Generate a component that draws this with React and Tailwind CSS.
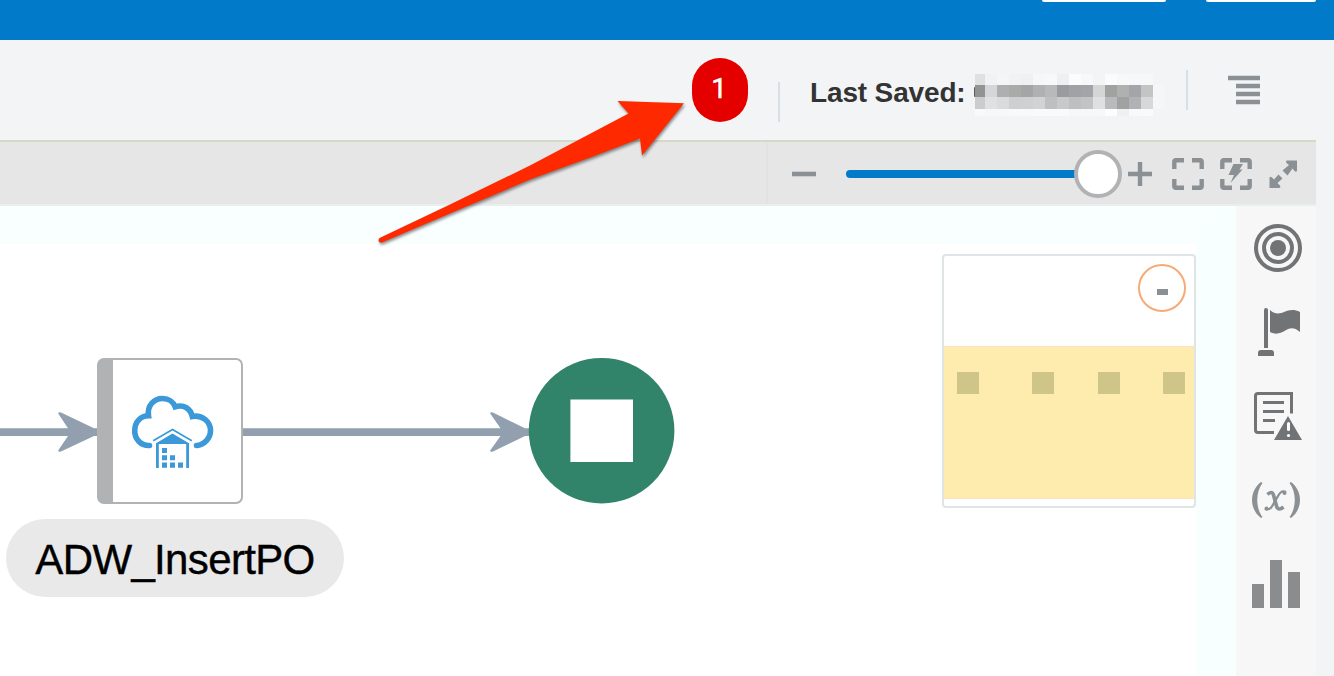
const MASK = [
  ['#dfe1e0', '#f1f2f3', '#f4f5f6', '#f0f2f3', '#eef0f2', '#f5f7f8', '#f6f8f9', '#edeff1', '#fafcfd', '#f6f8f9', '#f2f4f5', '#f9fbfc', '#f7f8fa', '#f6f7f9', '#f6f7f9', '#f3f4f6'],
  ['#929493', '#d4d6d8', '#aeb0af', '#a9abaa', '#a4a6a5', '#b0b1b3', '#b8b9bb', '#9a9b9e', '#a1a2a5', '#a3a4a7', '#d4d6d6', '#a0a2a1', '#afb1b0', '#a4a5a8', '#c3c5c4', '#f5f6f8'],
  ['#cbccce', '#e0e1e3', '#dadbdd', '#cecfd1', '#cfd0d2', '#d2d3d5', '#bebfc1', '#c8c9cb', '#bebfc1', '#c2c3c5', '#dfe1e0', '#b9babc', '#a0a2a1', '#b1b2b4', '#d7d8da', '#f5f6f8'],
  ['#f8faf9', '#f6f7f9', '#f7f8fa', '#f8f9fb', '#f8f9fb', '#f9fafb', '#f9fafc', '#f9fafc', '#f6f7f9', '#f6f7f9', '#f7f8fa', '#fcfdfd', '#eef0f2', '#f8f9fb', '#f9fafb', '#f3f4f6'],
];

function MaskedTimestamp() {
  return (
    <div className="grid h-[42px] w-[190.33px] grid-cols-[10.33px_repeat(15,12px)] grid-rows-[10.67px_12px_12px_7.33px]">
      {MASK.flat().map((c, i) => (
        <span key={i} style={{ backgroundColor: c }} />
      ))}
    </div>
  );
}

function TopBar() {
  return (
    <div className="flex h-10 shrink-0 justify-end gap-10 bg-[#007ac9] pr-[18px]">
      <div className="h-[2px] w-[124px] rounded-b-[2px] bg-white" />
      <div className="h-[2px] w-[110px] rounded-b-[2px] bg-white" />
    </div>
  );
}

function Header() {
  return (
    <header className="flex h-[100px] shrink-0 items-start pl-[692px]">
      <div className="mt-[18px] flex h-16 w-14 justify-center rounded-[28px] bg-[#e50000] pr-[2px] pt-[15px] font-['Roboto',sans-serif] text-[28px] leading-8 text-white [-webkit-text-stroke:0.5px_#fff]">
        1
      </div>
      <div className="ml-[30px] mt-[42px] h-10 w-[2px] bg-[#d6dfe6]" />
      <div className="ml-[30px] mt-[37px] w-[155px] whitespace-nowrap text-[28px] font-bold leading-8 tracking-[-0.15px] text-[#333]">
        Last Saved:
      </div>
      <div className="ml-[9px] mt-[47px] h-[10px] w-px rounded-l-full bg-[#5a5b5c]" />
      <div className="mt-[34px] flex">
        <MaskedTimestamp />
      </div>
      <div className="ml-[20.67px] mt-[30px] h-10 w-[2px] bg-[#d6dfe6]" />
      <svg className="ml-[40px] mt-[34px]" width="32" height="32" stroke="#8b9094" strokeWidth="4.600">
        <path d="M0 4H32M8 12H32M8 20H32M8 28H32" />
      </svg>
    </header>
  );
}

function ZoomSlider() {
  return (
    <div className="ml-[30px] flex h-12 w-[276px] items-center">
      <div className="h-2 w-[230px] rounded-l-full bg-[#007ac9]" />
      <div className="-ml-[2px] size-12 shrink-0 rounded-full border-4 border-[#b1b2b4] bg-white" />
    </div>
  );
}

const CORNERS = 'M2.300 11V4Q2.300 2.300 4 2.300H12M20 2.300H28Q29.700 2.300 29.700 4V11M29.700 21V28Q29.700 29.700 28 29.700H20M12 29.700H4Q2.300 29.700 2.300 28V21';

function Toolbar() {
  return (
    <div className="mr-[18px] flex h-[66px] shrink-0 items-center border-b-2 border-t-2 border-b-[#e9eeee] border-t-[#d5d9c5] bg-[#e6e6e6]">
      <div className="ml-[766px] h-full w-[2px] bg-[#e0e3e3]" />
      <div className="flex h-full items-center pt-[2px]">
        <svg className="ml-6" width="24" height="8" stroke="#8b9094" strokeWidth="4.600">
          <path d="M0 4H24" />
        </svg>
        <ZoomSlider />
        <svg className="ml-[6px]" width="24" height="24" stroke="#8b9094" strokeWidth="4.400">
          <path d="M0 12H24M12 0V24" />
        </svg>
        <svg className="ml-5" width="32" height="32" fill="none" stroke="#8b9094" strokeWidth="4.400">
          <path d={CORNERS} />
        </svg>
        <svg className="ml-4" width="32" height="32" fill="none" stroke="#8b9094" strokeWidth="4.400">
          <path d={CORNERS} />
          <path d="M13.500 6H23L19.500 11.500H22.500L10.500 25L14 17H8.500Z" fill="#8b9094" stroke="none" />
        </svg>
        <svg className="ml-[17px]" width="28" height="28" fill="#8b9094">
          <path d="M17 1.500Q17 0.500 18 0.500H28V11Q27 12.500 25.500 11L23.500 8.500L18.500 15.500L13.500 10.500L20 5L17.500 3ZM0.500 28V17.500Q1.500 16 3 17.500L5 19.500L9.500 14.500L13.500 18.500L8.500 23L11 25.500Q12 28 10 28Z" />
        </svg>
      </div>
    </div>
  );
}

function CloudWarehouse() {
  return (
    <svg width="84" height="74" viewBox="131 395 84 74" fill="none" stroke="#3b99d9">
      <path
        d="M149.500 445.500C140.500 446 134.700 438.500 134.700 431C134.700 421.500 141 415.800 148.500 415.800C147 405.500 154 398.500 162.500 398.500C169 398.500 173.500 402.300 175.200 406.800C184 404.300 190.500 408.500 192.300 416.500C202 414.500 210.500 421.500 210.500 430.500C210.500 438 204.500 444.800 196.500 445.500"
        strokeWidth="5.600"
        strokeLinecap="round"
      />
      <path d="M153.200 440.800L172.500 429.500L191.800 440.800" strokeWidth="1.600" />
      <path d="M156 443.200L172.500 433.500L189 443.200V468H186.200V444H158.800V468H156Z" fill="#3b99d9" stroke="none" />
      <path
        d="M162 448h5v5h-5zM162 455.200h5v5h-5zM162 462.400h5v5.400h-5zM170 455.200h5v5h-5zM170 462.400h5v5.400h-5zM178 462.400h5v5.400h-5z"
        fill="#3b99d9"
        stroke="none"
      />
    </svg>
  );
}

function MiniMap() {
  return (
    <div className="absolute left-[942px] top-[48px] flex h-[254px] w-[254px] flex-col rounded-[4px] border-2 border-[#dfe4e7] bg-white">
      <div className="flex h-[90px] justify-end pr-2 pt-2">
        <div className="flex size-12 items-center justify-center rounded-full border-2 border-[#f7aa74] pt-[7px]">
          <div className="h-[6px] w-[11px] bg-[#8b9094]" />
        </div>
      </div>
      <div className="h-[153px] border-b border-t border-[#fde0bd] bg-[#feecae]">
        <div className="flex pl-[13px] pt-[25px]">
          <div className="size-[22px] bg-[#d0c589]" />
          <div className="ml-[53px] size-[22px] bg-[#d0c589]" />
          <div className="ml-[43.600px] size-[22px] bg-[#d0c589]" />
          <div className="ml-[43.600px] size-[22px] bg-[#d0c589]" />
        </div>
      </div>
    </div>
  );
}

function Canvas() {
  return (
    <main className="relative w-[1236px] shrink-0 border-r-[40px] border-t-[38px] border-r-[#f8ffff] border-t-[#f9ffff] bg-white">
      <div className="absolute -top-[38px] left-0">
        <svg className="absolute left-0 top-0" width="700" height="400" viewBox="0 206 700 400" fill="#919fae">
          <path d="M0 428.300H68L58.500 414Q57.500 411.500 61 412.500L94 428.300H98V436H94L61 451.500Q57.500 452.500 58.500 450L68 436H0Z" />
          <path d="M242 428.300H500.500L490.500 414Q489.500 411.500 493 412.500L525 428.300H530V436H525L493 451.500Q489.500 452.500 490.500 450L500.500 436H242Z" />
        </svg>
        <div className="absolute left-[97px] top-[152px] flex h-[145.500px] w-[145.500px] items-start rounded-[7px] border-[2.500px] border-l-[16px] border-[#b1b2b4] bg-white pl-[18px] pt-[35px]">
          <CloudWarehouse />
        </div>
        <div className="absolute left-[6px] top-[313px] flex h-[78px] w-[338px] items-center justify-center rounded-full bg-[#e9e9e9] text-[42px] tracking-[-0.65px] text-black [-webkit-text-stroke:0.4px_#000]">
          <span className="pt-[3px]">ADW_InsertPO</span>
        </div>
        <svg className="absolute left-[528px] top-[151px]" width="148" height="148">
          <circle cx="73.600" cy="73.700" r="72.800" fill="#318469" />
          <path d="M42.400 42.500H105V105H42.400Z" fill="#fff" />
        </svg>
        <MiniMap />
      </div>
    </main>
  );
}

function Sidebar() {
  return (
    <aside className="flex w-20 shrink-0 flex-col items-center bg-[#f7f7f7] pl-[4px] pt-[18px]">
      <svg width="48" height="48" fill="none" stroke="#727375" strokeWidth="4">
        <circle cx="24" cy="24" r="22" />
        <circle cx="24" cy="24" r="14" />
        <circle cx="24" cy="24" r="8" fill="#727375" stroke="none" />
      </svg>
      <svg className="mt-9" width="48" height="48" fill="#727375">
        <path d="M10 2Q10 0 12 0Q14 0 14 2V40H10ZM4 48V45Q4 42 7 42H17Q20 42 20 45V48ZM16 2C27 12 32-3 46 4V24C33 13 30 31 16 24Z" />
      </svg>
      <svg className="mt-9" width="48" height="48" fill="none" stroke="#727375">
        <path d="M20 40.500H4Q1.500 40.500 1.500 38V4Q1.500 1.500 4 1.500H37.500V21.500" strokeWidth="3" />
        <path d="M9 10.500H30M9 19.500H30M9 28.500H21" strokeWidth="3" />
        <path d="M34 24L48 48H20Z" fill="#727375" stroke="none" />
        <path d="M34.500 31.500V37.500" stroke="#fff" strokeWidth="3" strokeLinecap="round" />
        <circle cx="34.500" cy="43.500" r="1.600" fill="#fff" stroke="none" />
      </svg>
      <svg className="mr-1 mt-10" width="48" height="40" fill="#8b9094">
        <path d="M9 2C-3 11-3 29 9 38L10.500 37C3.500 28 3.500 12 10.500 3ZM39 2C51 11 51 29 39 38L37.500 37C44.500 28 44.500 12 37.500 3Z" />
        <path d="M15.500 14.500C18 12 20.500 11.500 21.500 15L24.500 26C25.500 30 28.500 29.500 31.500 27" fill="none" stroke="#8b9094" strokeWidth="3.600" />
        <path d="M34 12C28 9 26 17 23 21C20 27 18 31 13 29" fill="none" stroke="#8b9094" strokeWidth="2.200" />
        <circle cx="32.500" cy="13" r="2" />
        <circle cx="14.500" cy="28.500" r="2" />
      </svg>
      <div className="mr-1 mt-10 flex h-12 items-end gap-[6px]">
        <div className="h-6 w-3 bg-[#8b8c8e]" />
        <div className="h-12 w-3 bg-[#8b8c8e]" />
        <div className="h-9 w-3 bg-[#8b8c8e]" />
      </div>
    </aside>
  );
}

export default function App() {
  return (
    <div className="relative flex h-[676px] w-[1334px] flex-col overflow-hidden bg-[#f2f4f6] font-['Liberation_Sans',Arial,sans-serif]">
      <TopBar />
      <Header />
      <Toolbar />
      <div className="flex min-h-0 flex-1">
        <Canvas />
        <Sidebar />
      </div>
      <svg className="pointer-events-none absolute left-[360px] top-[80px] drop-shadow-[1px_2px_1.5px_rgba(0,0,0,0.45)]" width="340" height="180" viewBox="360 80 340 180">
        <path
          d="M380 237.700L450 204.500L530 165.500L628.500 113.500L617.500 101L684 103.200L642 155.500L640 138.500L593 156.500L530 179.500L450 213.500L382 242.500Q378.500 243 378.500 240Q378.500 238.500 380 237.700Z"
          fill="#ff2900"
        />
      </svg>
    </div>
  );
}
